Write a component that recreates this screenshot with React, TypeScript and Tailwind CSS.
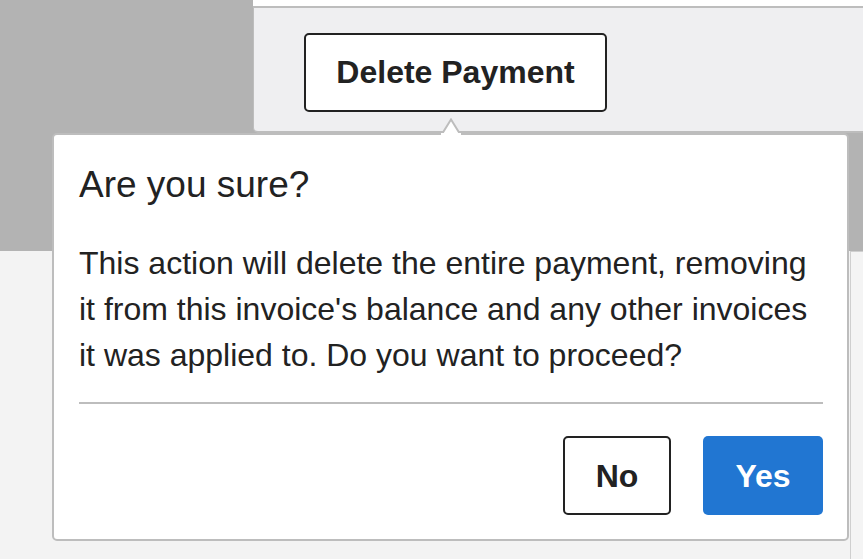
import React from "react";

export default function App() {
  return (
    <div
      className="relative w-[863px] h-[559px] overflow-hidden bg-[#f3f3f3] text-[#222]"
      style={{ fontFamily: '"Liberation Sans", Arial, Helvetica, sans-serif' }}
    >
      {/* Background layout */}
      <div className="flex h-[251px]">
        <div className="w-[253px] bg-[#b3b3b3]" />
        <div className="flex-1 flex flex-col bg-[#b3b3b3]">
          <div className="h-[6px] bg-white" />
          <div className="h-[127px] bg-[#efeff1] border-t-2 border-b-2 border-l border-[#bdbdbd] rounded-bl-[5px] flex items-center pl-[50px] pt-[5px]">
            <button className="w-[303px] h-[79px] bg-white border-2 border-[#222] rounded-[5px] text-[32px] font-bold text-[#222] flex items-center justify-center">
              Delete Payment
            </button>
          </div>
        </div>
      </div>
      <div className="flex h-[308px]">
        <div className="flex-1" />
        <div className="w-[13px] border-l border-t border-[#cfcfcf] bg-[#f4f4f4]" />
      </div>

      {/* Popover arrow */}
      <svg
        className="absolute left-[441px] top-[118px]"
        width="20"
        height="18"
        viewBox="0 0 20 18"
      >
        <polygon points="1,17 10,1.5 19,17" fill="#ffffff" />
        <polyline points="1,16 10,1.5 19,16" fill="none" stroke="#bdbdbd" strokeWidth="2" />
      </svg>

      {/* Popover */}
      <div className="absolute left-[52px] top-[133px] w-[797px] h-[408px] bg-white border-2 border-[#bdbdbd] rounded-[5px] pl-[25px] pr-[24px] pt-[28px] flex flex-col">
        <div className="absolute left-[387px] top-[-2px] w-[20px] h-[2px] bg-white" />
        <h2 className="text-[37px] leading-[44px] font-normal">Are you sure?</h2>
        <p className="mt-[33px] text-[32px] leading-[46px]">
          This action will delete the entire payment, removing it from this
          invoice's balance and any other invoices it was applied to. Do you
          want to proceed?
        </p>
        <div className="mt-[24px] h-[2px] bg-[#bdbdbd]" />
        <div className="mt-[32px] flex justify-end gap-[32px]">
          <button className="w-[108px] h-[79px] bg-white border-2 border-[#222] rounded-[5px] text-[32px] font-bold text-[#222] flex items-center justify-center">
            No
          </button>
          <button className="w-[120px] h-[79px] bg-[#2176d2] rounded-[5px] text-[32px] font-bold text-white flex items-center justify-center">
            Yes
          </button>
        </div>
      </div>
    </div>
  );
}
